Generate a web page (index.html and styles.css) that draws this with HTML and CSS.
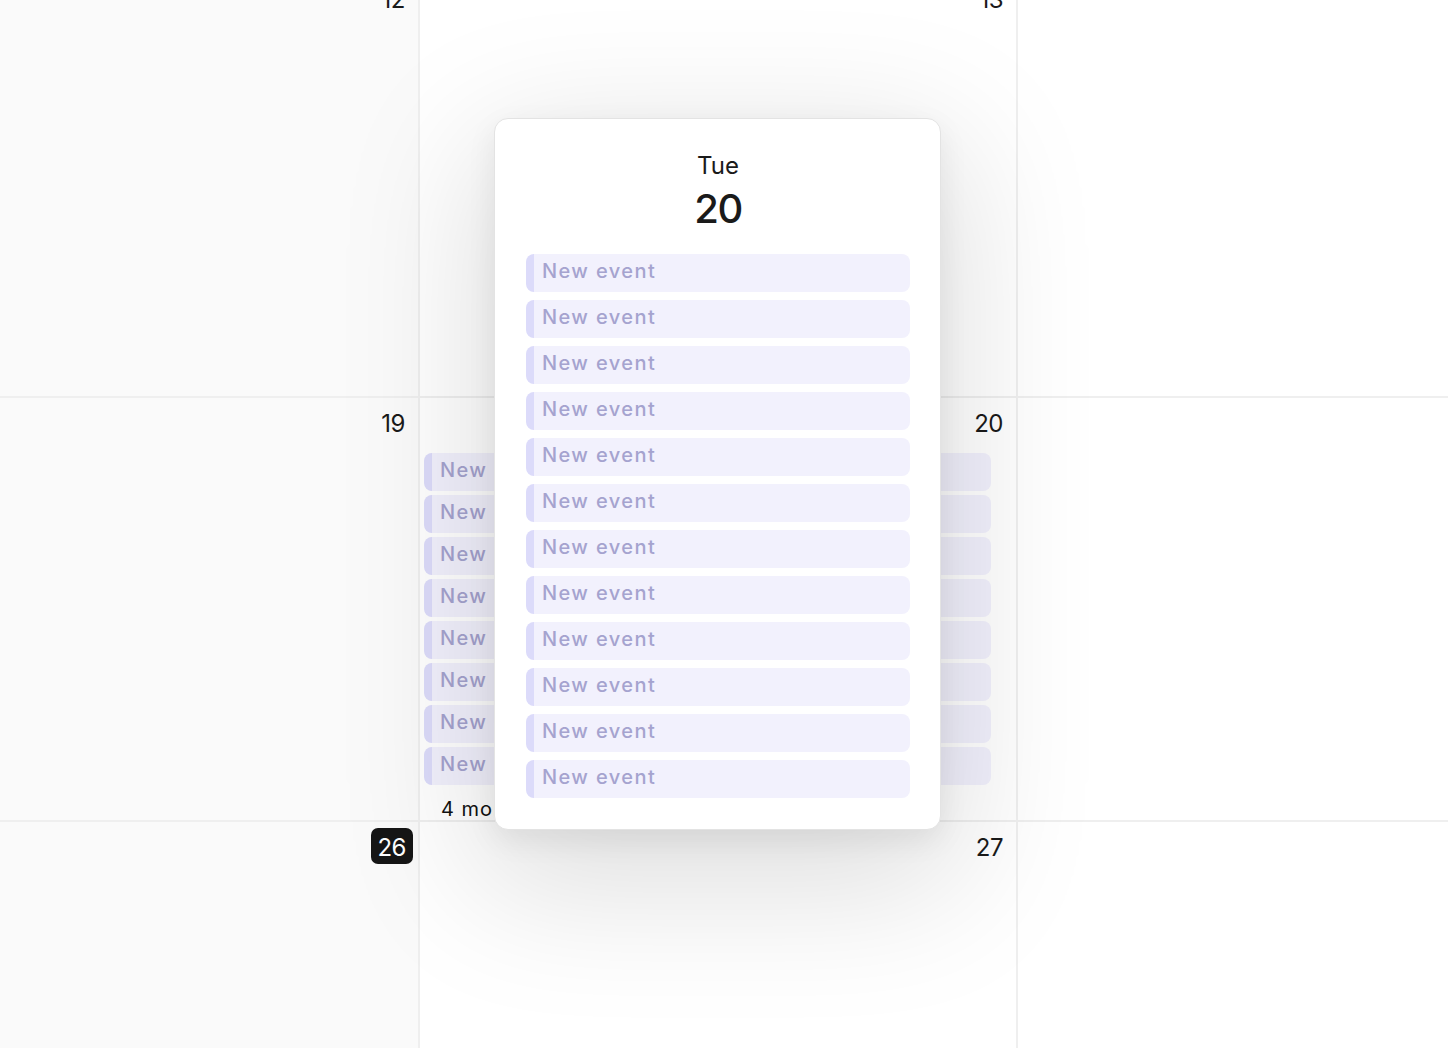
FILE: index.html
```html
<!DOCTYPE html>
<html lang="en">
<head>
<meta charset="utf-8">
<title>Calendar</title>
<link rel="stylesheet" href="styles.css">
</head>
<body>
<div class="calendar">
  <div class="cell cell--muted"><div class="date">12</div></div>
  <div class="cell"><div class="date">13</div></div>
  <div class="cell cell--plain"></div>

  <div class="cell cell--muted"><div class="date">19</div></div>
  <div class="cell">
    <div class="date">20</div>
    <div class="events">
      <div class="chip">New event</div>
      <div class="chip">New event</div>
      <div class="chip">New event</div>
      <div class="chip">New event</div>
      <div class="chip">New event</div>
      <div class="chip">New event</div>
      <div class="chip">New event</div>
      <div class="chip">New event</div>
      <div class="more">4 more</div>
    </div>
  </div>
  <div class="cell cell--plain"></div>

  <div class="cell cell--muted"><div class="date date--today">26</div></div>
  <div class="cell"><div class="date">27</div></div>
  <div class="cell cell--plain"></div>
</div>

<div class="popup">
  <div class="popup-head">
    <div class="popup-dow">Tue</div>
    <div class="popup-day">20</div>
  </div>
  <div class="popup-list">
    <div class="chip">New event</div>
    <div class="chip">New event</div>
    <div class="chip">New event</div>
    <div class="chip">New event</div>
    <div class="chip">New event</div>
    <div class="chip">New event</div>
    <div class="chip">New event</div>
    <div class="chip">New event</div>
    <div class="chip">New event</div>
    <div class="chip">New event</div>
    <div class="chip">New event</div>
    <div class="chip">New event</div>
  </div>
</div>
</body>
</html>
```
FILE: styles.css
```css
* { box-sizing: border-box; }
html, body {
  margin: 0;
  padding: 0;
  width: 1448px;
  height: 1048px;
  overflow: hidden;
  background: #ffffff;
  font-family: Inter, "Noto Sans", "DejaVu Sans", sans-serif;
  color: #1a1a1a;
}
.calendar {
  display: grid;
  grid-template-columns: 418px 596px 1fr;
  grid-auto-rows: 422px;
  gap: 2px;
  background: #efefef;
  margin-top: -26px;
}
.cell {
  background: #ffffff;
  display: flex;
  flex-direction: column;
  min-width: 0;
}
.cell--muted { background: #fafafa; }
.cell--plain { background: #ffffff; }
.date {
  align-self: flex-end;
  margin: 6px 6px 0 0;
  padding: 5px 7px 2px;
  font-size: 24px;
  line-height: 29px;
  letter-spacing: -0.5px;
  border-radius: 7px;
  color: #1a1a1a;
}
.date--today {
  background: #161616;
  color: #ffffff;
  margin-right: 5px;
  padding-left: 6px;
}
.events {
  display: flex;
  flex-direction: column;
  gap: 4px;
  padding: 13px 25px 0 4px;
}
.chip {
  height: 38px;
  line-height: 34px;
  padding: 0 0 4px 8px;
  border-left: 8px solid #dcdbfa;
  border-radius: 8px;
  background: #f2f1fd;
  color: #a5a3cf;
  font-size: 20px;
  font-weight: 450;
  letter-spacing: 1.4px;
  white-space: nowrap;
  overflow: hidden;
}
.more {
  margin-top: 8px;
  padding-left: 17px;
  font-size: 20px;
  line-height: 24px;
  color: #111111;
  letter-spacing: 1px;
}
.popup {
  position: absolute;
  left: 494px;
  top: 118px;
  width: 447px;
  padding: 32px 30px 31px 31px;
  background: #ffffff;
  border: 1px solid #e3e3e3;
  border-radius: 14px;
  box-shadow: 0 40px 140px 20px rgba(0, 0, 0, 0.13), 0 10px 30px rgba(0, 0, 0, 0.07);
}
.popup-head {
  display: flex;
  flex-direction: column;
  align-items: center;
}
.popup-dow {
  font-size: 24px;
  line-height: 29px;
  color: #1a1a1a;
}
.popup-day {
  margin-top: 5px;
  font-size: 40px;
  line-height: 48px;
  font-weight: 500;
  letter-spacing: -1.5px;
  color: #1a1a1a;
}
.popup-list {
  margin-top: 21px;
  display: flex;
  flex-direction: column;
  gap: 8px;
}
```
